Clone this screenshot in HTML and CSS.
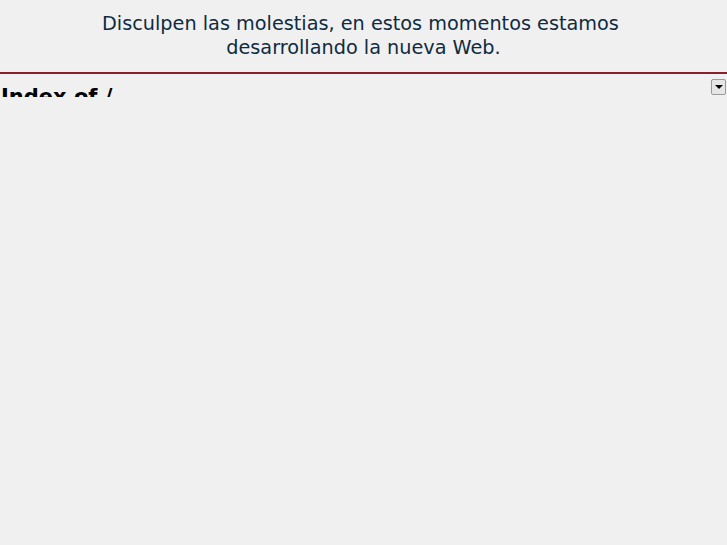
FILE: index.html
```html
<!DOCTYPE html>
<html lang="es">
<head>
<meta charset="utf-8">
<title>En construcción</title>
<link rel="stylesheet" href="styles.css">
</head>
<body>
<header class="notice">
  <p class="notice-text">Disculpen las molestias, en estos momentos estamos&nbsp;<br>desarrollando la nueva Web.</p>
</header>
<div class="frame">
  <h1 class="frame-title">Index of /</h1>
  <span class="scroll-btn"><span class="arrow"></span></span>
</div>
</body>
</html>
```
FILE: styles.css
```css
html, body {
  margin: 0;
  padding: 0;
  background: #f0f0f0;
}
body {
  font-family: "DejaVu Sans", sans-serif;
}
.notice {
  height: 74px;
  border-bottom: 2px solid #8a1d2e;
  box-sizing: border-box;
  padding-top: 12px;
}
.notice-text {
  margin: 0;
  text-align: center;
  font-size: 19.25px;
  line-height: 24px;
  color: #0f2b40;
}
.frame {
  position: relative;
  height: 23px;
  overflow: hidden;
}
.frame-title {
  margin: 0;
  padding: 11px 0 0 1px;
  font-size: 21px;
  line-height: 24px;
  font-weight: bold;
  color: #000;
}
.scroll-btn {
  position: absolute;
  top: 5px;
  right: 1px;
  width: 15px;
  height: 16px;
  box-sizing: border-box;
  border: 1px solid #9a9a9a;
  border-radius: 2px;
  background: #e6e6e6;
  display: flex;
  align-items: center;
  justify-content: center;
}
.arrow {
  width: 0;
  height: 0;
  border-left: 4px solid transparent;
  border-right: 4px solid transparent;
  border-top: 4px solid #000;
}
```
